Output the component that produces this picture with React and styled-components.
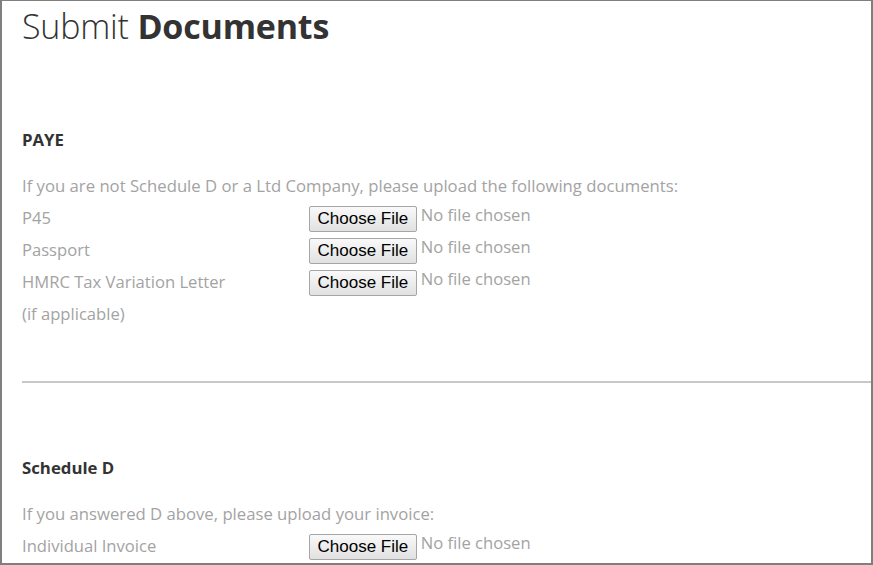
import React from 'react';
import styled, { createGlobalStyle } from 'styled-components';

const GlobalStyle = createGlobalStyle`
  html, body {
    margin: 0;
    padding: 0;
    background: #fff;
  }
  body {
    font-family: "Open Sans", "Liberation Sans", sans-serif;
  }
`;

const Frame = styled.div`
  box-sizing: border-box;
  width: 873px;
  height: 565px;
  overflow: hidden;
  border: 2px solid #7f7f7f;
  border-top-width: 1px;
  padding: 0 0 0 20px;
  background: #fff;
`;

const Title = styled.h1`
  margin: 0;
  padding-top: 3px;
  font-size: 34px;
  line-height: 44px;
  font-weight: 300;
  color: #333;
  letter-spacing: -0.2px;

  strong {
    font-weight: 700;
  }
`;

const Section = styled.section`
  padding-top: ${(p) => p.$top}px;
`;

const Heading = styled.h3`
  margin: 0 0 19px;
  font-size: 16.8px;
  line-height: 22px;
  font-weight: 700;
  color: #333;
`;

const Intro = styled.p`
  margin: 0;
  font-size: 16.7px;
  line-height: 32px;
  color: #a3a3a3;
`;

const Rows = styled.div`
  display: grid;
  grid-template-columns: 287px auto;
  align-items: start;
`;

const Label = styled.div`
  font-size: 16.6px;
  line-height: 32px;
  color: #a3a3a3;
`;

const FileField = styled.div`
  display: flex;
  align-items: flex-start;
  gap: 4px;
  padding-top: 4px;
`;

const ChooseButton = styled.button`
  box-sizing: border-box;
  height: 26px;
  padding: 0 7.5px;
  border: 1px solid #a6a6a6;
  border-radius: 2px;
  background: linear-gradient(#f9f9f9, #e1e1e1);
  font-family: "Liberation Sans", Arial, sans-serif;
  font-size: 17px;
  line-height: 24px;
  color: #000;
  cursor: pointer;
`;

const NoFile = styled.span`
  font-size: 16.6px;
  line-height: 18px;
  color: #a3a3a3;
`;

const Divider = styled.hr`
  margin: 0;
  border: 0;
  height: 2px;
  background: #c8c8c8;
`;

const FileRow = ({ label }) => (
  <>
    <Label>{label}</Label>
    <FileField>
      <ChooseButton type="button">Choose File</ChooseButton>
      <NoFile>No file chosen</NoFile>
    </FileField>
  </>
);

export default function App() {
  return (
    <>
      <GlobalStyle />
      <Frame>
        <Title>
          Submit <strong>Documents</strong>
        </Title>

        <Section $top={81}>
          <Heading>PAYE</Heading>
          <Intro>If you are not Schedule D or a Ltd Company, please upload the following documents:</Intro>
          <Rows>
            <FileRow label="P45" />
            <FileRow label="Passport" />
            <FileRow label="HMRC Tax Variation Letter" />
            <Label>(if applicable)</Label>
          </Rows>
        </Section>

        <Section $top={51}>
          <Divider />
        </Section>

        <Section $top={74}>
          <Heading>Schedule D</Heading>
          <Intro>If you answered D above, please upload your invoice:</Intro>
          <Rows>
            <FileRow label="Individual Invoice" />
          </Rows>
        </Section>
      </Frame>
    </>
  );
}
